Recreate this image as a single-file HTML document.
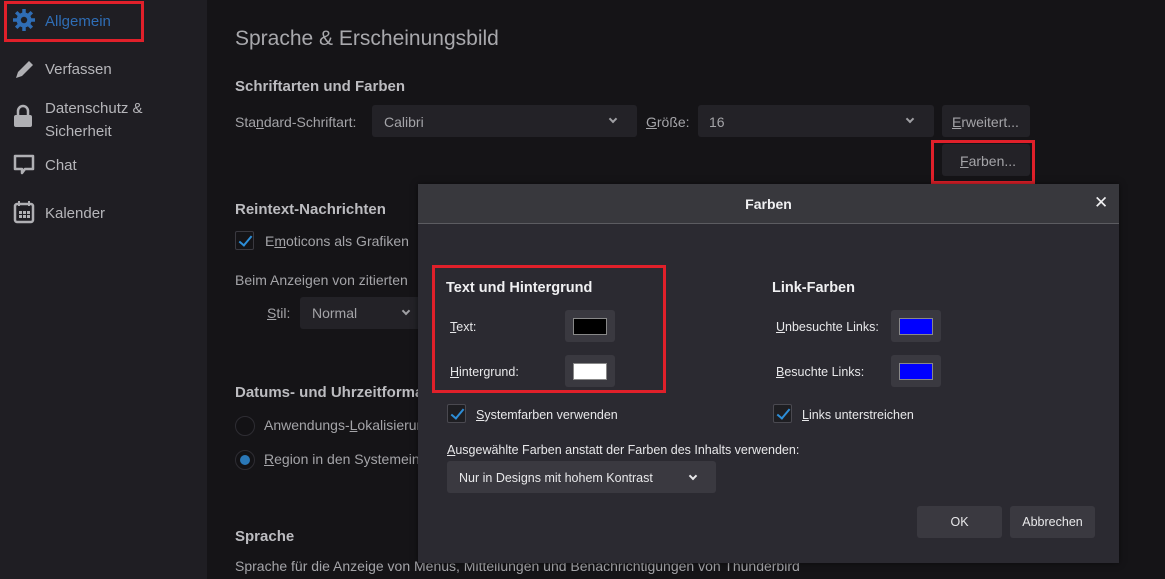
<!DOCTYPE html>
<html><head><meta charset="utf-8"><style>
*{margin:0;padding:0;box-sizing:border-box}
body{width:1165px;height:579px;overflow:hidden;background:#151417;font-family:"Liberation Sans",sans-serif;color:#c8c8cc;position:relative}
.a{position:absolute;white-space:nowrap}
#side{position:absolute;left:0;top:0;width:207px;height:579px;background:#1f1e23}
.nav{position:absolute;left:45px;font-size:15px;color:#b6b6ba}
.red{position:absolute;border:3px solid #e0202a}
.sel{background:#232227;border-radius:3px;position:absolute}
.chev{position:absolute;width:6px;height:6px;border-right:2px solid #a0a0a4;border-bottom:2px solid #a0a0a4;transform:rotate(45deg)}
.h{font-weight:bold;font-size:15px;color:#bcbcc0}
.t{font-size:14px;color:#a4a4a8}
.dl{font-size:12.5px;color:#e8e8ea}
.sw{position:absolute;width:50px;height:32px;background:#3a3940;border-radius:3px}
.sw i{position:absolute;left:8px;top:8px;width:34px;height:17px;border:1px solid #888}
.cb{position:absolute;width:19px;height:19px;border:1px solid #4a4950;border-radius:2px;background:#1e1e22}
.cb:after{content:"";position:absolute;left:6px;top:1px;width:5px;height:11px;border-right:2px solid #2d8ed8;border-bottom:2px solid #2d8ed8;transform:rotate(40deg)}
.btn{position:absolute;background:#3a3940;border-radius:3px;font-size:12.5px;color:#e8e8ea;text-align:center}
u{text-decoration:underline}
</style></head><body>
<div id="side"></div>
<svg class="a" style="left:12px;top:8px" width="24" height="24" viewBox="0 0 24 24"><g fill="#2f6db5"><circle cx="12" cy="12" r="7.5"/><g stroke="#2f6db5" stroke-width="3.5"><line x1="12" y1="1" x2="12" y2="23"/><line x1="1" y1="12" x2="23" y2="12"/><line x1="4.2" y1="4.2" x2="19.8" y2="19.8"/><line x1="19.8" y1="4.2" x2="4.2" y2="19.8"/></g></g><circle cx="12" cy="12" r="3.2" fill="#1f1e23"/></svg>
<div class="nav" style="top:13px;color:#2f6db5">Allgemein</div>
<div class="red" style="left:4px;top:1px;width:140px;height:41px"></div>
<svg class="a" style="left:13px;top:58px" width="22" height="22" viewBox="0 0 22 22"><path d="M3 20 L5 14 L16 3 L20 7 L9 18 Z" fill="#b0b0b4"/></svg>
<div class="nav" style="top:61px">Verfassen</div>
<svg class="a" style="left:13px;top:104px" width="20" height="24" viewBox="0 0 20 24"><path d="M5 11 V7 a5 5 0 0 1 10 0 V11" stroke="#b0b0b4" stroke-width="2.5" fill="none"/><rect x="1" y="11" width="18" height="12" rx="2" fill="#b0b0b4"/></svg>
<div class="nav" style="top:97px;line-height:23px">Datenschutz &amp;<br>Sicherheit</div>
<svg class="a" style="left:12px;top:153px" width="24" height="24" viewBox="0 0 24 24"><path d="M3 3 H21 V16 H13 L10 20 V16 H3 Z" stroke="#b0b0b4" stroke-width="2.5" fill="none" stroke-linejoin="round"/></svg>
<div class="nav" style="top:157px">Chat</div>
<svg class="a" style="left:13px;top:200px" width="22" height="24" viewBox="0 0 22 24"><rect x="2" y="4" width="18" height="18" rx="2" stroke="#b0b0b4" stroke-width="2.5" fill="none"/><line x1="6" y1="1" x2="6" y2="6" stroke="#b0b0b4" stroke-width="2"/><line x1="16" y1="1" x2="16" y2="6" stroke="#b0b0b4" stroke-width="2"/><g fill="#b0b0b4"><rect x="6" y="11" width="3" height="3"/><rect x="10" y="11" width="3" height="3"/><rect x="14" y="11" width="3" height="3"/><rect x="6" y="15" width="3" height="3"/><rect x="10" y="15" width="3" height="3"/><rect x="14" y="15" width="3" height="3"/></g></svg>
<div class="nav" style="top:205px">Kalender</div>

<div class="a" style="left:235px;top:27px;font-size:21px;color:#a8a8ac">Sprache &amp; Erscheinungsbild</div>
<div class="a h" style="left:235px;top:78px">Schriftarten und Farben</div>
<div class="a t" style="left:235px;top:114px">Sta<u>n</u>dard-Schriftart:</div>
<div class="sel" style="left:372px;top:105px;width:265px;height:32px"></div>
<div class="a t" style="left:384px;top:114px">Calibri</div>
<div class="chev" style="left:610px;top:116px"></div>
<div class="a t" style="left:646px;top:114px"><u>G</u>röße:</div>
<div class="sel" style="left:698px;top:105px;width:236px;height:32px"></div>
<div class="a t" style="left:709px;top:114px">16</div>
<div class="chev" style="left:907px;top:116px"></div>
<div class="sel" style="left:942px;top:105px;width:88px;height:32px;background:#232227"></div>
<div class="a t" style="left:952px;top:114px"><u>E</u>rweitert...</div>
<div class="sel" style="left:942px;top:144px;width:88px;height:32px"></div>
<div class="a t" style="left:960px;top:153px"><u>F</u>arben...</div>
<div class="red" style="left:931px;top:140px;width:104px;height:44px"></div>

<div class="a h" style="left:235px;top:201px">Reintext-Nachrichten</div>
<div class="cb" style="left:235px;top:231px;border-color:#3a3940;background:#151417"></div>
<div class="a t" style="left:265px;top:233px">E<u>m</u>oticons als Grafiken</div>
<div class="a t" style="left:235px;top:272px">Beim Anzeigen von zitierten</div>
<div class="a t" style="left:267px;top:305px"><u>S</u>til:</div>
<div class="sel" style="left:300px;top:297px;width:130px;height:32px"></div>
<div class="a t" style="left:312px;top:305px">Normal</div>
<div class="chev" style="left:403px;top:308px"></div>
<div class="a h" style="left:235px;top:384px">Datums- und Uhrzeitformat</div>
<div class="a" style="left:235px;top:416px;width:20px;height:20px;border-radius:50%;border:1px solid #2e2d33;background:#131215"></div>
<div class="a t" style="left:264px;top:417px">Anwendungs-<u>L</u>okalisierung</div>
<div class="a" style="left:235px;top:450px;width:20px;height:20px;border-radius:50%;border:1px solid #2e2d33;background:#131215"></div>
<div class="a" style="left:240px;top:455px;width:10px;height:10px;border-radius:50%;background:#2a78b8"></div>
<div class="a t" style="left:264px;top:451px"><u>R</u>egion in den Systemeinstellungen</div>
<div class="a h" style="left:235px;top:528px">Sprache</div>
<div class="a t" style="left:235px;top:558px">Sprache für die Anzeige von Menüs, Mitteilungen und Benachrichtigungen von Thunderbird</div>

<div class="a" style="left:418px;top:184px;width:701px;height:379px;background:#2b2a31;box-shadow:0 0 6px rgba(0,0,0,.5)">
  <div class="a" style="left:0;top:0;width:701px;height:40px;background:#38383d;border-bottom:1px solid #5c5c61"></div>
  <div class="a" style="left:0;top:12px;width:701px;text-align:center;font-size:14px;font-weight:bold;color:#f0f0f2">Farben</div>
  <div class="a" style="left:676px;top:9px;font-size:17px;color:#f0f0f2">✕</div>
</div>
<div class="a" style="left:446px;top:280px;font-size:14.5px;font-weight:bold;color:#f0f0f2">Text und Hintergrund</div>
<div class="a dl" style="left:450px;top:320px"><u>T</u>ext:</div>
<div class="sw" style="left:565px;top:310px"><i style="background:#000"></i></div>
<div class="a dl" style="left:450px;top:365px"><u>H</u>intergrund:</div>
<div class="sw" style="left:565px;top:355px"><i style="background:#fff"></i></div>
<div class="red" style="left:432px;top:265px;width:234px;height:128px"></div>
<div class="a" style="left:772px;top:280px;font-size:14.5px;font-weight:bold;color:#f0f0f2">Link-Farben</div>
<div class="a dl" style="left:776px;top:320px"><u>U</u>nbesuchte Links:</div>
<div class="sw" style="left:891px;top:310px"><i style="background:#00f"></i></div>
<div class="a dl" style="left:776px;top:365px"><u>B</u>esuchte Links:</div>
<div class="sw" style="left:891px;top:355px"><i style="background:#00f"></i></div>
<div class="cb" style="left:447px;top:404px"></div>
<div class="a dl" style="left:476px;top:408px"><u>S</u>ystemfarben verwenden</div>
<div class="cb" style="left:773px;top:404px"></div>
<div class="a dl" style="left:802px;top:408px"><u>L</u>inks unterstreichen</div>
<div class="a dl" style="left:447px;top:443px"><u>A</u>usgewählte Farben anstatt der Farben des Inhalts verwenden:</div>
<div class="btn" style="left:447px;top:461px;width:269px;height:32px"></div>
<div class="a dl" style="left:459px;top:471px">Nur in Designs mit hohem Kontrast</div>
<div class="chev" style="left:690px;top:473px;border-color:#e8e8ea"></div>
<div class="btn" style="left:917px;top:506px;width:85px;height:32px;line-height:32px">OK</div>
<div class="btn" style="left:1010px;top:506px;width:85px;height:32px;line-height:32px">Abbrechen</div>
</body></html>
